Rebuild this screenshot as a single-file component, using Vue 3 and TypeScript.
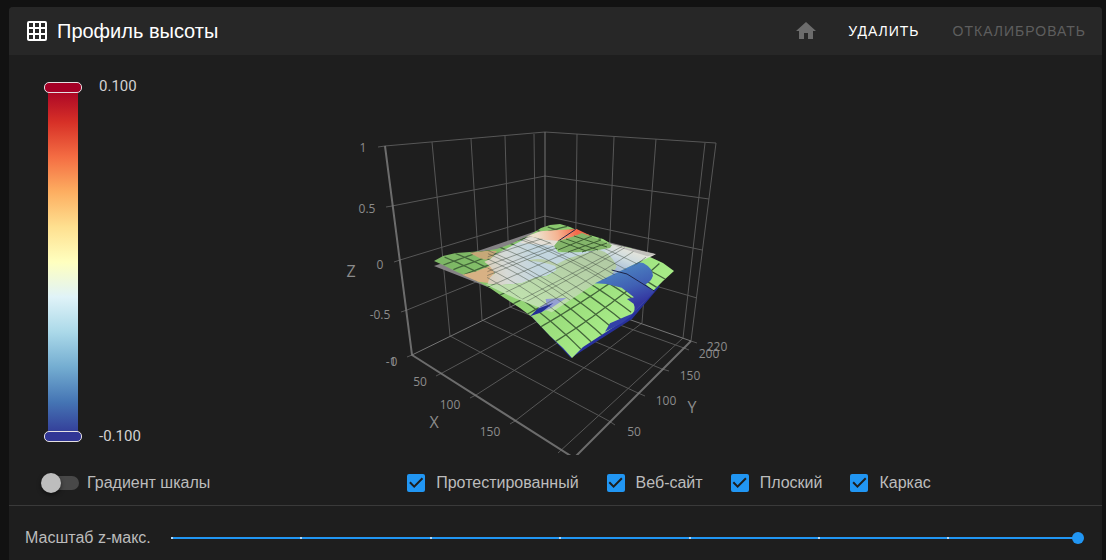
<script setup lang="ts">
import { reactive, ref } from 'vue'

type Pt = [number, number]

const title = 'Профиль высоты'
const colorMax = ref(0.1)
const colorMin = ref(-0.1)
const scaleGradient = ref(false)
const zScale = ref(7)

const layers = reactive([
  { id: 'probed', label: 'Протестированный', on: true },
  { id: 'mesh', label: 'Веб-сайт', on: true },
  { id: 'flat', label: 'Плоский', on: true },
  { id: 'wireframe', label: 'Каркас', on: true },
])

const gridLines: number[][] = [
  [378, 147, 385, 146, 545, 132, 716, 143],
  [386, 207, 392, 206, 545, 176, 709, 199],
  [394, 262, 400, 260, 545, 216, 702, 250],
  [401, 312, 407, 310, 545, 254, 697, 298],
  [407, 357, 412, 355],
  [691, 341, 697, 343],
  [432, 142, 450, 336, 609, 421, 615, 425],
  [471, 139, 482, 320, 638, 393, 645, 396],
  [505, 136, 510, 307, 662, 369, 669, 371],
  [534, 134, 536, 295, 684, 348, 689, 350],
  [577, 134, 575, 301, 442, 373, 436, 376],
  [614, 137, 607, 311, 476, 395, 470, 398],
  [656, 139, 642, 323, 515, 421, 510, 424],
  [705, 143, 683, 338, 558, 453],
  [716, 143, 691, 341],
]
const axisLines: number[][] = [
  [385, 146, 412, 355, 574, 458, 691, 341],
]
const edgeLines: number[][] = [
  [412, 355, 545, 290, 691, 341],
  [545, 132, 545, 290],
]

const tickLabels = [
  { x: 363, y: 152, t: '1' },
  { x: 367, y: 213, t: '0.5' },
  { x: 380, y: 269, t: '0' },
  { x: 380, y: 319, t: '-0.5' },
  { x: 391, y: 366, t: '-1' },
  { x: 394, y: 366, t: '0' },
  { x: 420, y: 386, t: '50' },
  { x: 450, y: 409, t: '100' },
  { x: 490, y: 436, t: '150' },
  { x: 634, y: 436, t: '50' },
  { x: 666, y: 405, t: '100' },
  { x: 690, y: 380, t: '150' },
  { x: 709, y: 358, t: '200' },
  { x: 717, y: 351, t: '220' },
]

const edgeLeft: Pt[] = [[434, 261], [443, 265], [457, 272], [473, 279], [490, 288], [503, 297], [520, 308], [532, 317], [550, 336], [563, 348], [572, 358]]
const edgeBack: Pt[] = [[434, 261], [443, 256], [456, 253], [470, 252], [484, 251], [497, 249], [513, 243], [530, 235], [541, 228], [550, 225], [560, 224]]
const edgeRight: Pt[] = [[560, 224], [570, 227], [583, 233], [603, 239], [613, 245], [630, 248], [640, 252], [650, 257], [663, 263], [674, 271]]
const edgeFront: Pt[] = [[572, 358], [583, 347], [603, 334], [620, 323], [631, 315], [643, 303], [654, 290], [663, 281], [674, 271]]

const quad = (a: Pt, c: Pt, b: Pt, t: number): Pt => [
  (1 - t) * (1 - t) * a[0] + 2 * t * (1 - t) * c[0] + t * t * b[0],
  (1 - t) * (1 - t) * a[1] + 2 * t * (1 - t) * c[1] + t * t * b[1],
]
const W: Pt = [434, 261]
const S: Pt = [572, 358]
const N: Pt = [560, 224]
const E: Pt = [674, 271]

// Coons patch stretched between four smooth edges
function patch(k: number, v: number): Pt {
  const u = k / (1 + 0.5 * (1 - k))
  const a = quad(W, [510, 292], S, u)
  const b = quad(N, [618, 242], E, u)
  const c = quad(W, [492, 240], N, v)
  const d = quad(S, [630, 318], E, v)
  const mix = (i: 0 | 1) =>
    (1 - v) * a[i] + v * b[i] + (1 - u) * c[i] + u * d[i] -
    ((1 - u) * (1 - v) * W[i] + u * (1 - v) * S[i] + (1 - u) * v * N[i] + u * v * E[i])
  return [mix(0), mix(1)]
}

const str = (pts: Pt[]) => pts.map((p) => p[0].toFixed(1) + ',' + p[1].toFixed(1)).join(' ')
const steps = Array.from({ length: 25 }, (_, i) => i / 24)
const CELLS = 11
const wires: string[] = []
for (let i = 1; i < CELLS; i++) {
  const k = i / CELLS
  wires.push(str(steps.map((s) => patch(k, s))))
  wires.push(str(steps.map((s) => patch(s, k))))
}
const coarse: string[] = []
for (const k of [0.33, 0.66]) {
  coarse.push(str(steps.map((s) => patch(k, s))))
  coarse.push(str(steps.map((s) => patch(s, k))))
}
const outline = str([...edgeBack, ...edgeRight, ...[...edgeFront].reverse(), ...[...edgeLeft].reverse()])
</script>

<template>
  <main class="page">
    <section class="card">
      <header class="head">
        <svg class="icon" viewBox="0 0 24 24" aria-hidden="true">
          <path d="M10,4V8H14V4H10M16,4V8H20V4H16M16,10V14H20V10H16M16,16V20H20V16H16M14,20V16H10V20H14M8,20V16H4V20H8M8,14V10H4V14H8M8,8V4H4V8H8M10,14H14V10H10V14M4,2H20A2,2 0 0,1 22,4V20A2,2 0 0,1 20,22H4C2.92,22 2,21.1 2,20V4A2,2 0 0,1 4,2Z" />
        </svg>
        <h1>{{ title }}</h1>
        <button type="button" class="btn home" disabled aria-label="Home">
          <svg class="icon" viewBox="0 0 24 24" aria-hidden="true"><path d="M10,20V14H14V20H19V12H22L12,3L2,12H5V20H10Z" /></svg>
        </button>
        <button type="button" class="btn">УДАЛИТЬ</button>
        <button type="button" class="btn" disabled>ОТКАЛИБРОВАТЬ</button>
      </header>

      <div class="body">
        <div class="scale">
          <div class="ramp">
            <input v-model.number="colorMax" class="stop high" type="range" min="0" max="0.1" step="0.001" aria-label="Max" />
            <input v-model.number="colorMin" class="stop low" type="range" min="-0.1" max="0" step="0.001" aria-label="Min" />
          </div>
          <div class="limits">
            <span>{{ colorMax.toFixed(3) }}</span>
            <span>{{ colorMin.toFixed(3) }}</span>
          </div>
        </div>

        <svg class="plot" viewBox="236 55 608 400" role="img" :aria-label="title">
          <defs>
            <linearGradient id="gGreen" gradientUnits="userSpaceOnUse" x1="480" y1="235" x2="590" y2="345">
              <stop offset="0" stop-color="#7db765" />
              <stop offset="0.5" stop-color="#93d475" />
              <stop offset="1" stop-color="#a6ea86" />
            </linearGradient>
            <linearGradient id="gBlue" gradientUnits="userSpaceOnUse" x1="605" y1="160" x2="640" y2="265">
              <stop offset="0" stop-color="#4a7dbf" />
              <stop offset="0.5" stop-color="#4060b4" />
              <stop offset="1" stop-color="#3335a0" />
            </linearGradient>
            <linearGradient id="gHot" gradientUnits="userSpaceOnUse" x1="340" y1="75" x2="455" y2="48">
              <stop offset="0" stop-color="#eee0cc" />
              <stop offset="0.5" stop-color="#f5b492" />
              <stop offset="1" stop-color="#f4694a" />
            </linearGradient>
            <linearGradient id="gPale" gradientUnits="userSpaceOnUse" x1="180" y1="160" x2="330" y2="130">
              <stop offset="0" stop-color="#d9cdb8" />
              <stop offset="0.4" stop-color="#d6dad6" />
              <stop offset="1" stop-color="#c3d6df" />
            </linearGradient>
            <linearGradient id="gSide" gradientUnits="userSpaceOnUse" x1="610" y1="95" x2="575" y2="190">
              <stop offset="0" stop-color="#e8e6da" />
              <stop offset="0.4" stop-color="#cddbe0" />
              <stop offset="1" stop-color="#8da6d0" />
            </linearGradient>
            <linearGradient id="gMist" gradientUnits="userSpaceOnUse" x1="460" y1="110" x2="390" y2="290">
              <stop offset="0" stop-color="#b2cba4" />
              <stop offset="1" stop-color="#bfe0ae" />
            </linearGradient>
            <clipPath id="cSurface"><polygon :points="outline" /></clipPath>
            <clipPath id="cPlane"><path d="M488 251L513 243L528 236L548 240L560 253L608 248L613 243L656 254L640 263L595 284L552 312L487 284Z" /></clipPath>
          </defs>

          <g class="grid">
            <polyline v-for="(l, i) in gridLines" :key="i" :points="l.join(' ')" />
          </g>
          <g class="edge">
            <polyline v-for="(l, i) in edgeLines" :key="i" :points="l.join(' ')" />
          </g>
          <g class="axis">
            <polyline v-for="(l, i) in axisLines" :key="i" :points="l.join(' ')" />
          </g>

          <polygon points="434,266 548,227 656,254 552,312" fill="#858285" />
          <polygon points="530,315 571,358 632,319 660,286 645,280" fill="#27309b" />
          <polygon :points="outline" fill="url(#gGreen)" />
          <g class="wire" clip-path="url(#cSurface)">
            <polyline v-for="(w, i) in wires" :key="i" :points="w" />
          </g>

          <g transform="translate(425 215) scale(0.3333)">
            <path d="M135 113L190 107L216 108L200 128L182 134Q158 130 135 113Z" fill="#c6a878" />
            <path d="M112 179L150 170L205 149L210 170L190 204L160 200Z" fill="#d8b184" />
            <path d="M310 62L345 49L400 45L455 42L497 62L452 62L425 72L400 82L340 84L290 80Z" fill="url(#gHot)" />
            <path d="M214 116L250 98L310 66L365 76L400 78L388 95L400 112L460 112L520 105L560 92L580 140L400 158L392 168L365 182L330 188L290 205L230 210L188 206Q192 185 210 175L196 155L178 140L196 132Z" fill="url(#gPale)" />
            <path d="M310 66L365 76L400 78L388 92L285 84Z" fill="#e4dfd6" />
            <path d="M545 84L692 118L640 142L510 206L500 190L560 160L540 110Z" fill="url(#gSide)" />
            <path d="M182 208L230 210L290 205L330 188L370 182L395 165L390 150L430 130L520 104Q558 112 575 155L560 180L510 206L380 292L270 250Z" fill="url(#gMist)" />
            <path d="M306 138Q350 122 400 150L394 154Q350 138 306 138Z" fill="#b9cda9" />
            <path d="M510 205L640 142L655 144Q684 160 684 182Q678 200 662 208L688 230L620 300Q634 284 626 266L606 252L627 247L590 218L545 207Z" fill="url(#gBlue)" />
            <path d="M540 350L555 325L600 305L622 296L616 306L590 325Z" fill="#3340a8" />
            <path d="M315 304L350 283L338 280L364 264L362 252L425 248L378 280Z" fill="#949fd2" />
            <path d="M315 304L338 281L385 264L350 292Z" fill="#242f95" />
            <path class="fold" d="M560 165L606 177L688 228M400 78L452 43" />
            <path d="M562 90L692 118L668 124L600 103Z" fill="#a9a6a6" fill-opacity="0.6" />
          </g>

          <g class="wire soft" clip-path="url(#cPlane)">
            <polyline v-for="(w, i) in wires" :key="i" :points="w" />
          </g>
          <g class="coarse" clip-path="url(#cPlane)">
            <polyline v-for="(w, i) in coarse" :key="i" :points="w" />
          </g>

          <path d="M554 246L558 241L572 237L582 233L595 238L612 245L610 248L598 250L578 252L562 252Z" fill="#84b66a" />
          <g class="wire leaf">
            <path d="M560 241L586 251M566 239L598 250M574 236L607 247M558 250L592 236M568 252L601 240M582 252L607 243" />
          </g>

          <g class="ticks">
            <text v-for="(l, i) in tickLabels" :key="i" :x="l.x" :y="l.y">{{ l.t }}</text>
          </g>
          <g class="names">
            <text x="351" y="277">Z</text>
            <text x="434" y="428">X</text>
            <text x="692" y="413">Y</text>
          </g>
        </svg>
      </div>

      <div class="options">
        <label class="toggle">
          <input v-model="scaleGradient" type="checkbox" role="switch" />
          <span>Градиент шкалы</span>
        </label>
        <div class="checks">
          <label v-for="l in layers" :key="l.id" class="check">
            <input v-model="l.on" type="checkbox" />
            <span>{{ l.label }}</span>
          </label>
        </div>
      </div>

      <div class="zrow">
        <label for="zscale">Масштаб z-макс.</label>
        <div class="slider">
          <input id="zscale" v-model.number="zScale" type="range" min="0" max="7" step="1" />
          <div class="marks" aria-hidden="true"><i v-for="n in 8" :key="n"></i></div>
        </div>
      </div>
    </section>
  </main>
</template>

<style>
html,
body {
  background: #121212;
}
</style>

<style scoped>
.page {
  box-sizing: border-box;
  height: 100vh;
  overflow: hidden;
  padding: 7px 4px 0 9px;
  background: #121212;
  color: #bcbcbc;
  font: 16px/24px 'Liberation Sans', Arial, sans-serif;
}
.card {
  background: #1e1e1e;
  border-radius: 4px;
  overflow: hidden;
}
.head {
  display: flex;
  align-items: center;
  height: 48px;
  padding: 0 16px;
  background: #272727;
  color: #fff;
}
.icon {
  width: 24px;
  height: 24px;
  fill: currentColor;
  display: block;
}
h1 {
  flex: 1;
  margin: 0 0 0 8px;
  font-size: 20px;
  font-weight: 400;
  line-height: 32px;
}
.btn {
  margin: 0 0 0 32px;
  padding: 0;
  border: 0;
  background: none;
  color: #fff;
  font: inherit;
  font-size: 14px;
  letter-spacing: 1px;
}
.btn + .btn {
  margin-left: 33px;
}
.home + .btn {
  margin-left: 30px;
}
.btn:disabled {
  color: #5e5e5e;
}
.home:disabled {
  color: #6c6c6c;
}
.body {
  display: grid;
  grid-template-columns: 227px 1fr;
}
.scale {
  display: flex;
  align-items: flex-start;
  padding: 27px 0 0 35px;
}
.ramp {
  display: flex;
  flex-direction: column;
  align-items: center;
  width: 38px;
  height: 360px;
  background: linear-gradient(#a50026, #d73027, #f46d43, #fdae61, #fee090, #ffffbf, #e0f3f8, #abd9e9, #74add1, #4575b4, #313695) center / 30px 350px no-repeat;
}
.stop {
  appearance: none;
  writing-mode: vertical-lr;
  direction: rtl;
  width: 38px;
  height: 180px;
  margin: 0;
  background: none;
}
.stop::-webkit-slider-thumb {
  appearance: none;
  box-sizing: border-box;
  width: 38px;
  height: 11px;
  border: 1px solid #e4dfe2;
  border-radius: 5px;
  background: #a50026;
}
.low::-webkit-slider-thumb {
  background: #313695;
}
.limits {
  display: flex;
  flex-direction: column;
  justify-content: space-between;
  height: 374px;
  margin: -8px 0 0 17px;
  color: #d2d2d2;
  font-family: Roboto, sans-serif;
  font-size: 15px;
}
.plot {
  display: block;
  width: 608px;
  height: 400px;
  max-width: 100%;
}
.grid polyline,
.edge polyline,
.axis polyline,
.wire polyline,
.wire path,
.coarse polyline,
.fold {
  fill: none;
}
.grid {
  stroke: #575757;
}
.edge {
  stroke: #757575;
}
.axis {
  stroke: #808080;
  stroke-width: 2px;
  stroke-opacity: 0.8;
}
.wire {
  stroke: #43663a;
  stroke-width: 1.3px;
}
.soft {
  stroke: #4a554a;
  stroke-opacity: 0.5;
  stroke-width: 1px;
}
.leaf {
  stroke: #3e5e33;
  stroke-width: 1px;
}
.coarse {
  stroke: #20261f;
  stroke-opacity: 0.35;
}
.fold {
  stroke: #1d2347;
  stroke-width: 3px;
}
.ticks,
.names {
  fill: #8c8c8c;
  font-family: 'Open Sans', sans-serif;
  text-anchor: middle;
}
.ticks {
  font-size: 12px;
}
.names {
  font-size: 16px;
}
.options {
  display: grid;
  grid-template-columns: 227px 1fr;
  align-items: center;
  box-sizing: border-box;
  height: 51px;
  padding-top: 6px;
  border-bottom: 1px solid #3a3a3a;
}
.options,
.zrow {
  white-space: nowrap;
}
.toggle {
  display: flex;
  align-items: center;
  gap: 8px;
  padding: 0 0 0 32px;
}
.toggle input {
  appearance: none;
  display: flex;
  align-items: center;
  width: 38px;
  height: 20px;
  margin: 0;
}
.toggle input::before {
  content: '';
  z-index: 1;
  flex: none;
  width: 20px;
  height: 20px;
  border-radius: 50%;
  background: #bdbdbd;
  box-shadow: 0 2px 4px rgb(0 0 0 / 50%);
}
.toggle input::after {
  content: '';
  flex: none;
  width: 28px;
  height: 14px;
  margin-left: -10px;
  border-radius: 7px;
  background: #484848;
}
.toggle input:checked {
  flex-direction: row-reverse;
}
.checks {
  display: flex;
  justify-content: center;
  gap: 28px;
}
.check {
  display: flex;
  align-items: center;
  gap: 11px;
}
.check input {
  appearance: none;
  width: 18px;
  height: 18px;
  margin: 0;
  border-radius: 2px;
  background: #666;
}
.check input:checked {
  background: #2196f3;
}
.check input:checked::before {
  content: '';
  display: block;
  width: 18px;
  height: 18px;
  background: #1e1e1e;
  clip-path: path('M7 14L2 9L3.4 7.6L7 11.2L14.6 3.6L16 5Z');
}
.zrow {
  display: flex;
  align-items: center;
  gap: 15px;
  height: 64px;
  padding: 0 18px 0 16px;
}
.slider {
  display: grid;
  flex: 1;
  align-items: center;
}
.slider > * {
  grid-area: 1 / 1;
}
.slider input {
  appearance: none;
  width: 100%;
  height: 12px;
  margin: 0;
  background: linear-gradient(#2196f3, #2196f3) center / calc(100% - 12px) 2px no-repeat;
}
.slider input::-webkit-slider-thumb {
  appearance: none;
  width: 12px;
  height: 12px;
  border-radius: 50%;
  background: #2196f3;
}
.marks {
  display: flex;
  justify-content: space-between;
  padding: 0 5px;
  pointer-events: none;
}
.marks i {
  width: 2px;
  height: 2px;
  background: #b5d9f7;
}
.marks i:last-child {
  background: none;
}
</style>
